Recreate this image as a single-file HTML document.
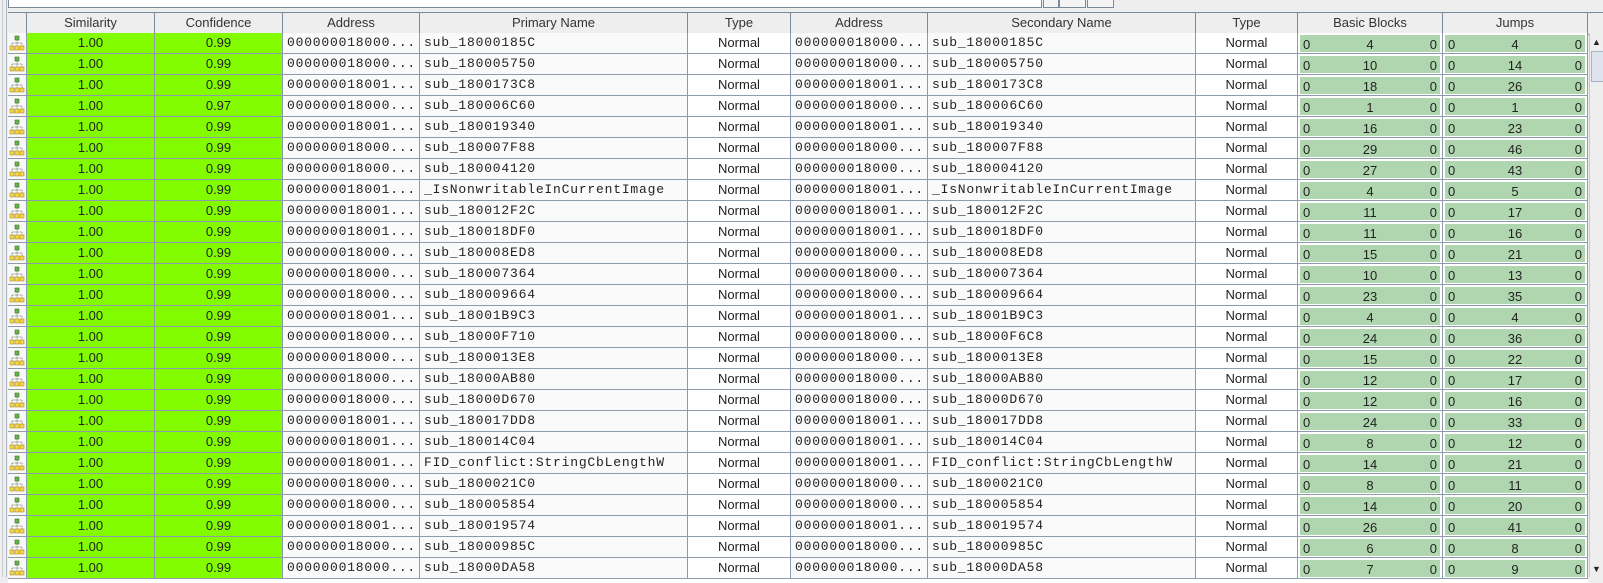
<!DOCTYPE html>
<html><head><meta charset="utf-8"><style>
body{margin:0;width:1603px;height:577px;background:#eeeeee;overflow:hidden;position:relative;font-family:"Liberation Sans",sans-serif;font-size:13px;color:#222}
.top{position:absolute;left:8px;top:-2px;width:1032px;height:8px;border:1px solid #7a8a9c;background:#fff}
.btn{position:absolute;top:-2px;height:8px;border:1px solid #7a8a9c;background:#f4f4f4}
.vl{position:absolute;left:6px;top:0;width:1px;height:577px;background:#b0b8c4}
.vl2{position:absolute;left:2px;top:0;width:1px;height:577px;background:#c8ccd2}
.hdr{position:absolute;left:8px;top:12px;display:grid;grid-template-columns:19px 128px 128px 137px 268px 103px 137px 268px 102px 145px 145px 15px;height:21px;border-top:1px solid #7a8a9c;border-bottom:1px solid #7a8a9c;background:#eeeeee}
.hdr div{border-right:1px solid #7a8a9c;text-align:center;line-height:20px;color:#333}
.g{position:absolute;left:8px;top:33px;height:550px;overflow:hidden;display:grid;grid-template-columns:19px 128px 128px 137px 268px 103px 137px 268px 102px 145px 145px;grid-auto-rows:21px;background:#fff}
.g>div{border-right:1px solid #8d9bad;border-bottom:1px solid #8d9bad;line-height:20px;white-space:nowrap;overflow:hidden;box-sizing:border-box}
.i{background:#f8f8f8;display:flex;align-items:center;justify-content:center}
.s{background:#84fc00;text-align:center}
.a{font-family:"Liberation Mono",monospace;padding-left:4px;font-size:13px;letter-spacing:0.8px;background:#fafafa}
.c{text-align:center}
.b{position:relative;background:#fff}
.b span{position:absolute;left:2px;right:2px;top:2px;bottom:1px;background:#b0d6b0;line-height:19px;text-align:center}
.b span:before{content:"0";position:absolute;left:3px}
.b span:after{content:"0";position:absolute;right:3px}
.sb{position:absolute;left:1589px;top:33px;width:14px;height:544px;background:#eeeeee;border-left:1px solid #c8c8c8}
.th{position:absolute;left:1591px;top:51px;width:12px;height:29px;background:#dde4ee;border:1px solid #a8b4c4}
</style></head><body>
<div class="vl2"></div>
<div class="vl"></div>
<div class="top"></div>
<div class="btn" style="left:1043px;width:14px"></div>
<div class="btn" style="left:1059px;width:25px"></div>
<div class="btn" style="left:1087px;width:25px"></div>
<div class="hdr"><div></div><div>Similarity</div><div>Confidence</div><div>Address</div><div>Primary Name</div><div>Type</div><div>Address</div><div>Secondary Name</div><div>Type</div><div>Basic Blocks</div><div>Jumps</div><div style="border:none"></div></div>
<svg width="0" height="0" style="position:absolute"><defs><symbol id="ic" viewBox="0 0 16 16"><rect x="6" y="1" width="4" height="4" fill="#6ab04c" stroke="#3a7a2a" stroke-width=".6"/><path d="M8 5v3M3 8h10M3 8v3M8 8v3M13 8v3" stroke="#777" stroke-width=".8" fill="none" stroke-dasharray="1 .6"/><rect x="1" y="11" width="4" height="4" fill="#f4d84a" stroke="#b09020" stroke-width=".6"/><rect x="6" y="11" width="4" height="4" fill="#f4d84a" stroke="#b09020" stroke-width=".6"/><rect x="11" y="11" width="4" height="4" fill="#f4d84a" stroke="#b09020" stroke-width=".6"/></symbol></defs></svg>
<div class="g">
<div class="i"><svg width="16" height="16"><use href="#ic"/></svg></div><div class="s">1.00</div><div class="s">0.99</div><div class="a">000000018000...</div><div class="a">sub_18000185C</div><div class="c">Normal</div><div class="a">000000018000...</div><div class="a">sub_18000185C</div><div class="c">Normal</div><div class="b"><span>4</span></div><div class="b"><span>4</span></div>
<div class="i"><svg width="16" height="16"><use href="#ic"/></svg></div><div class="s">1.00</div><div class="s">0.99</div><div class="a">000000018000...</div><div class="a">sub_180005750</div><div class="c">Normal</div><div class="a">000000018000...</div><div class="a">sub_180005750</div><div class="c">Normal</div><div class="b"><span>10</span></div><div class="b"><span>14</span></div>
<div class="i"><svg width="16" height="16"><use href="#ic"/></svg></div><div class="s">1.00</div><div class="s">0.99</div><div class="a">000000018001...</div><div class="a">sub_1800173C8</div><div class="c">Normal</div><div class="a">000000018001...</div><div class="a">sub_1800173C8</div><div class="c">Normal</div><div class="b"><span>18</span></div><div class="b"><span>26</span></div>
<div class="i"><svg width="16" height="16"><use href="#ic"/></svg></div><div class="s">1.00</div><div class="s">0.97</div><div class="a">000000018000...</div><div class="a">sub_180006C60</div><div class="c">Normal</div><div class="a">000000018000...</div><div class="a">sub_180006C60</div><div class="c">Normal</div><div class="b"><span>1</span></div><div class="b"><span>1</span></div>
<div class="i"><svg width="16" height="16"><use href="#ic"/></svg></div><div class="s">1.00</div><div class="s">0.99</div><div class="a">000000018001...</div><div class="a">sub_180019340</div><div class="c">Normal</div><div class="a">000000018001...</div><div class="a">sub_180019340</div><div class="c">Normal</div><div class="b"><span>16</span></div><div class="b"><span>23</span></div>
<div class="i"><svg width="16" height="16"><use href="#ic"/></svg></div><div class="s">1.00</div><div class="s">0.99</div><div class="a">000000018000...</div><div class="a">sub_180007F88</div><div class="c">Normal</div><div class="a">000000018000...</div><div class="a">sub_180007F88</div><div class="c">Normal</div><div class="b"><span>29</span></div><div class="b"><span>46</span></div>
<div class="i"><svg width="16" height="16"><use href="#ic"/></svg></div><div class="s">1.00</div><div class="s">0.99</div><div class="a">000000018000...</div><div class="a">sub_180004120</div><div class="c">Normal</div><div class="a">000000018000...</div><div class="a">sub_180004120</div><div class="c">Normal</div><div class="b"><span>27</span></div><div class="b"><span>43</span></div>
<div class="i"><svg width="16" height="16"><use href="#ic"/></svg></div><div class="s">1.00</div><div class="s">0.99</div><div class="a">000000018001...</div><div class="a">_IsNonwritableInCurrentImage</div><div class="c">Normal</div><div class="a">000000018001...</div><div class="a">_IsNonwritableInCurrentImage</div><div class="c">Normal</div><div class="b"><span>4</span></div><div class="b"><span>5</span></div>
<div class="i"><svg width="16" height="16"><use href="#ic"/></svg></div><div class="s">1.00</div><div class="s">0.99</div><div class="a">000000018001...</div><div class="a">sub_180012F2C</div><div class="c">Normal</div><div class="a">000000018001...</div><div class="a">sub_180012F2C</div><div class="c">Normal</div><div class="b"><span>11</span></div><div class="b"><span>17</span></div>
<div class="i"><svg width="16" height="16"><use href="#ic"/></svg></div><div class="s">1.00</div><div class="s">0.99</div><div class="a">000000018001...</div><div class="a">sub_180018DF0</div><div class="c">Normal</div><div class="a">000000018001...</div><div class="a">sub_180018DF0</div><div class="c">Normal</div><div class="b"><span>11</span></div><div class="b"><span>16</span></div>
<div class="i"><svg width="16" height="16"><use href="#ic"/></svg></div><div class="s">1.00</div><div class="s">0.99</div><div class="a">000000018000...</div><div class="a">sub_180008ED8</div><div class="c">Normal</div><div class="a">000000018000...</div><div class="a">sub_180008ED8</div><div class="c">Normal</div><div class="b"><span>15</span></div><div class="b"><span>21</span></div>
<div class="i"><svg width="16" height="16"><use href="#ic"/></svg></div><div class="s">1.00</div><div class="s">0.99</div><div class="a">000000018000...</div><div class="a">sub_180007364</div><div class="c">Normal</div><div class="a">000000018000...</div><div class="a">sub_180007364</div><div class="c">Normal</div><div class="b"><span>10</span></div><div class="b"><span>13</span></div>
<div class="i"><svg width="16" height="16"><use href="#ic"/></svg></div><div class="s">1.00</div><div class="s">0.99</div><div class="a">000000018000...</div><div class="a">sub_180009664</div><div class="c">Normal</div><div class="a">000000018000...</div><div class="a">sub_180009664</div><div class="c">Normal</div><div class="b"><span>23</span></div><div class="b"><span>35</span></div>
<div class="i"><svg width="16" height="16"><use href="#ic"/></svg></div><div class="s">1.00</div><div class="s">0.99</div><div class="a">000000018001...</div><div class="a">sub_18001B9C3</div><div class="c">Normal</div><div class="a">000000018001...</div><div class="a">sub_18001B9C3</div><div class="c">Normal</div><div class="b"><span>4</span></div><div class="b"><span>4</span></div>
<div class="i"><svg width="16" height="16"><use href="#ic"/></svg></div><div class="s">1.00</div><div class="s">0.99</div><div class="a">000000018000...</div><div class="a">sub_18000F710</div><div class="c">Normal</div><div class="a">000000018000...</div><div class="a">sub_18000F6C8</div><div class="c">Normal</div><div class="b"><span>24</span></div><div class="b"><span>36</span></div>
<div class="i"><svg width="16" height="16"><use href="#ic"/></svg></div><div class="s">1.00</div><div class="s">0.99</div><div class="a">000000018000...</div><div class="a">sub_1800013E8</div><div class="c">Normal</div><div class="a">000000018000...</div><div class="a">sub_1800013E8</div><div class="c">Normal</div><div class="b"><span>15</span></div><div class="b"><span>22</span></div>
<div class="i"><svg width="16" height="16"><use href="#ic"/></svg></div><div class="s">1.00</div><div class="s">0.99</div><div class="a">000000018000...</div><div class="a">sub_18000AB80</div><div class="c">Normal</div><div class="a">000000018000...</div><div class="a">sub_18000AB80</div><div class="c">Normal</div><div class="b"><span>12</span></div><div class="b"><span>17</span></div>
<div class="i"><svg width="16" height="16"><use href="#ic"/></svg></div><div class="s">1.00</div><div class="s">0.99</div><div class="a">000000018000...</div><div class="a">sub_18000D670</div><div class="c">Normal</div><div class="a">000000018000...</div><div class="a">sub_18000D670</div><div class="c">Normal</div><div class="b"><span>12</span></div><div class="b"><span>16</span></div>
<div class="i"><svg width="16" height="16"><use href="#ic"/></svg></div><div class="s">1.00</div><div class="s">0.99</div><div class="a">000000018001...</div><div class="a">sub_180017DD8</div><div class="c">Normal</div><div class="a">000000018001...</div><div class="a">sub_180017DD8</div><div class="c">Normal</div><div class="b"><span>24</span></div><div class="b"><span>33</span></div>
<div class="i"><svg width="16" height="16"><use href="#ic"/></svg></div><div class="s">1.00</div><div class="s">0.99</div><div class="a">000000018001...</div><div class="a">sub_180014C04</div><div class="c">Normal</div><div class="a">000000018001...</div><div class="a">sub_180014C04</div><div class="c">Normal</div><div class="b"><span>8</span></div><div class="b"><span>12</span></div>
<div class="i"><svg width="16" height="16"><use href="#ic"/></svg></div><div class="s">1.00</div><div class="s">0.99</div><div class="a">000000018001...</div><div class="a">FID_conflict:StringCbLengthW</div><div class="c">Normal</div><div class="a">000000018001...</div><div class="a">FID_conflict:StringCbLengthW</div><div class="c">Normal</div><div class="b"><span>14</span></div><div class="b"><span>21</span></div>
<div class="i"><svg width="16" height="16"><use href="#ic"/></svg></div><div class="s">1.00</div><div class="s">0.99</div><div class="a">000000018000...</div><div class="a">sub_1800021C0</div><div class="c">Normal</div><div class="a">000000018000...</div><div class="a">sub_1800021C0</div><div class="c">Normal</div><div class="b"><span>8</span></div><div class="b"><span>11</span></div>
<div class="i"><svg width="16" height="16"><use href="#ic"/></svg></div><div class="s">1.00</div><div class="s">0.99</div><div class="a">000000018000...</div><div class="a">sub_180005854</div><div class="c">Normal</div><div class="a">000000018000...</div><div class="a">sub_180005854</div><div class="c">Normal</div><div class="b"><span>14</span></div><div class="b"><span>20</span></div>
<div class="i"><svg width="16" height="16"><use href="#ic"/></svg></div><div class="s">1.00</div><div class="s">0.99</div><div class="a">000000018001...</div><div class="a">sub_180019574</div><div class="c">Normal</div><div class="a">000000018001...</div><div class="a">sub_180019574</div><div class="c">Normal</div><div class="b"><span>26</span></div><div class="b"><span>41</span></div>
<div class="i"><svg width="16" height="16"><use href="#ic"/></svg></div><div class="s">1.00</div><div class="s">0.99</div><div class="a">000000018000...</div><div class="a">sub_18000985C</div><div class="c">Normal</div><div class="a">000000018000...</div><div class="a">sub_18000985C</div><div class="c">Normal</div><div class="b"><span>6</span></div><div class="b"><span>8</span></div>
<div class="i"><svg width="16" height="16"><use href="#ic"/></svg></div><div class="s">1.00</div><div class="s">0.99</div><div class="a">000000018000...</div><div class="a">sub_18000DA58</div><div class="c">Normal</div><div class="a">000000018000...</div><div class="a">sub_18000DA58</div><div class="c">Normal</div><div class="b"><span>7</span></div><div class="b"><span>9</span></div>
</div>
<div class="sb"></div>
<div class="th"></div>
<div style="position:absolute;left:1592px;top:37px;font-size:9px;color:#222">▲</div>
<div style="position:absolute;left:1592px;top:564px;font-size:9px;color:#222">▼</div>
</body></html>
